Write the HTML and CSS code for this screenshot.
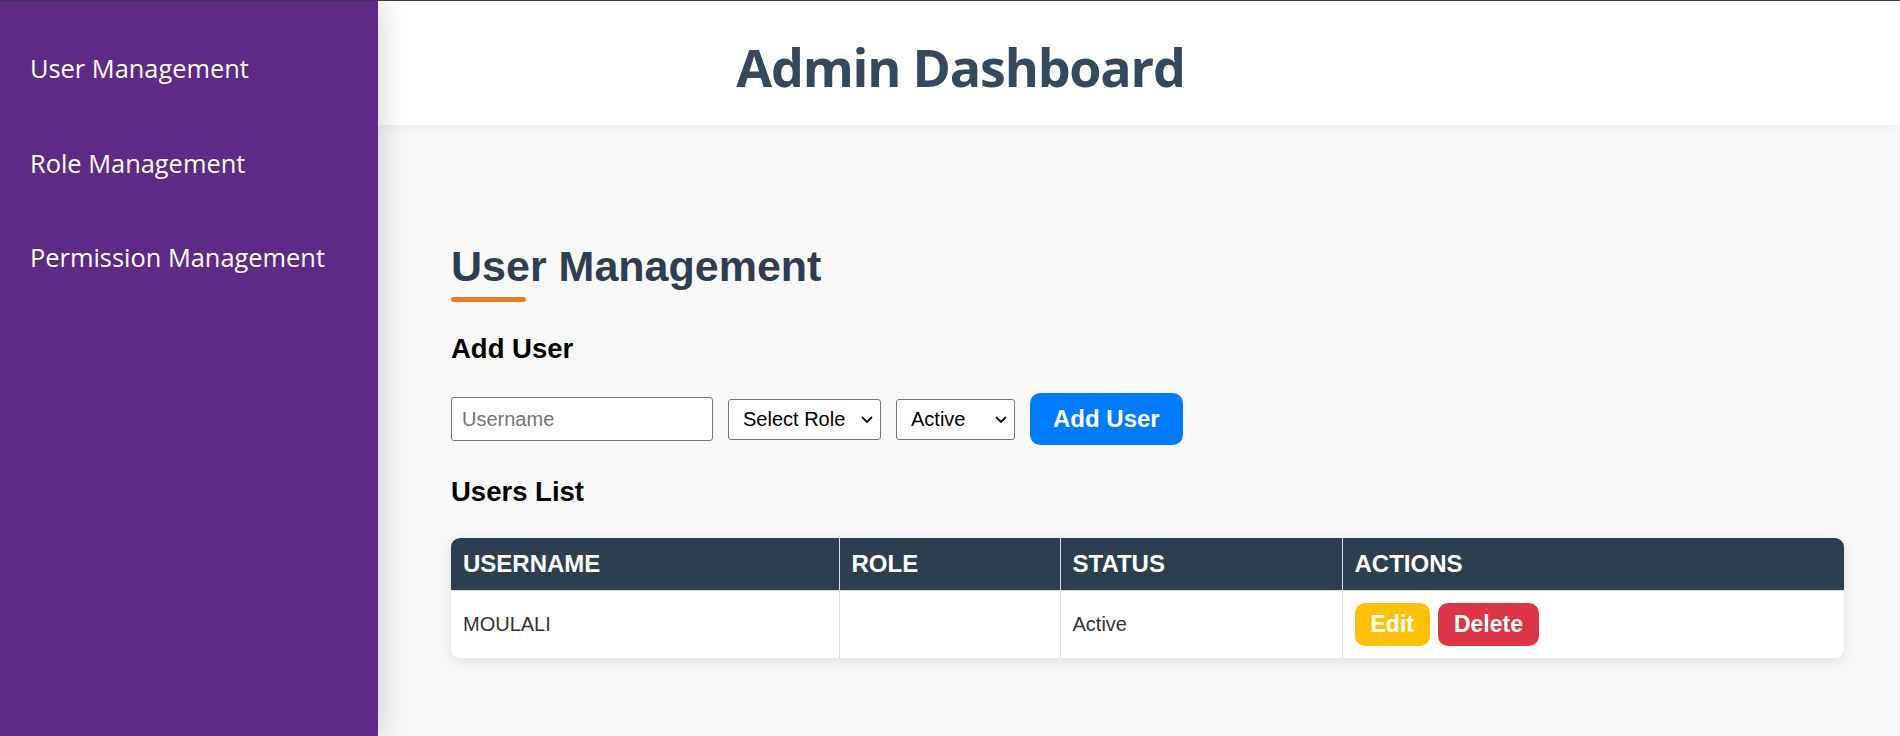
FILE: index.html
```html
<!DOCTYPE html>
<html lang="en">
<head>
<meta charset="utf-8">
<title>Admin Dashboard</title>
<link rel="stylesheet" href="styles.css">
</head>
<body>
  <aside class="sidebar">
    <ul class="nav">
      <li class="nav-item">User Management</li>
      <li class="nav-item">Role Management</li>
      <li class="nav-item">Permission Management</li>
    </ul>
  </aside>
  <div class="main">
    <header class="topbar">
      <h1 class="topbar-title">Admin Dashboard</h1>
    </header>
    <section class="content">
      <h2 class="page-title">User Management</h2>
      <h3 class="section-title">Add User</h3>
      <div class="add-form">
        <input class="text-input" type="text" placeholder="Username">
        <div class="select-wrap">
          <select class="select select-role">
            <option>Select Role</option>
            <option>Admin</option>
            <option>Editor</option>
          </select>
          <svg class="chev" width="12" height="8" viewBox="0 0 12 8"><path d="M1.5 1.5 L6 6 L10.5 1.5" fill="none" stroke="#111" stroke-width="1.8" stroke-linecap="round" stroke-linejoin="round"/></svg>
        </div>
        <div class="select-wrap">
          <select class="select select-status">
            <option>Active</option>
            <option>Inactive</option>
          </select>
          <svg class="chev" width="12" height="8" viewBox="0 0 12 8"><path d="M1.5 1.5 L6 6 L10.5 1.5" fill="none" stroke="#111" stroke-width="1.8" stroke-linecap="round" stroke-linejoin="round"/></svg>
        </div>
        <button class="btn btn-primary" type="button">Add User</button>
      </div>
      <h3 class="section-title list-title">Users List</h3>
      <div class="table-card">
        <table class="users-table">
          <thead>
            <tr>
              <th class="col-user">Username</th>
              <th class="col-role">Role</th>
              <th class="col-status">Status</th>
              <th class="col-actions">Actions</th>
            </tr>
          </thead>
          <tbody>
            <tr>
              <td>MOULALI</td>
              <td></td>
              <td>Active</td>
              <td>
                <div class="actions">
                  <button class="btn btn-small btn-edit" type="button">Edit</button>
                  <button class="btn btn-small btn-delete" type="button">Delete</button>
                </div>
              </td>
            </tr>
          </tbody>
        </table>
      </div>
    </section>
  </div>
</body>
</html>
```

FILE: styles.css
```css
* {
  box-sizing: border-box;
}

html, body {
  height: 100%;
}

body {
  margin: 0;
  display: flex;
  min-height: 100vh;
  border-top: 1px solid #3c3c3c;
  font-family: "Liberation Sans", Arial, sans-serif;
  background: #f8f8f8;
  overflow: hidden;
}

.sidebar {
  width: 378px;
  flex: 0 0 378px;
  background: #5d2a87;
  position: relative;
  z-index: 2;
  box-shadow: 0 0 30px rgba(0, 0, 0, 0.2);
}

.nav {
  list-style: none;
  margin: 0;
  padding: 20px 0 0;
}

.nav-item {
  padding: 30px 30px 30.5px;
  font-family: "Open Sans", "Noto Sans", sans-serif;
  font-size: 25.4px;
  line-height: 34px;
  color: #ffffff;
}

.main {
  flex: 1;
  display: flex;
  flex-direction: column;
  min-width: 0;
  background: #f8f8f8;
}

.topbar {
  height: 124px;
  padding: 30px 357px 0 0;
  background: #ffffff;
  box-shadow: 0 2px 10px rgba(0, 0, 0, 0.05);
  position: relative;
  z-index: 1;
}

.topbar-title {
  margin: 0;
  text-align: center;
  font-family: "Open Sans", "Noto Sans", sans-serif;
  font-weight: 700;
  font-size: 52px;
  line-height: normal;
  letter-spacing: -1.2px;
  color: #34495e;
}

.content {
  padding: 117px 56px 0 73px;
}

.page-title {
  margin: 0;
  font-size: 43px;
  font-weight: 700;
  line-height: normal;
  color: #2c3e50;
}

.page-title::after {
  content: "";
  display: block;
  width: 75px;
  height: 5px;
  margin-top: 6px;
  border-radius: 3px;
  background: #e67e22;
}

.section-title {
  margin: 31px 0 0;
  font-size: 27.5px;
  font-weight: 700;
  line-height: normal;
  color: #000;
}

.add-form {
  margin-top: 28px;
  display: flex;
  align-items: center;
  gap: 15px;
}

.text-input {
  width: 262px;
  height: 44px;
  padding: 9px 10px;
  border: 1px solid #767676;
  border-radius: 3px;
  background: #fff;
  font-family: "Liberation Sans", Arial, sans-serif;
  font-size: 20px;
  color: #000;
}

.text-input::placeholder {
  color: #757575;
}

.select-wrap {
  position: relative;
  display: flex;
}

.select {
  -webkit-appearance: none;
  appearance: none;
  height: 41px;
  padding: 0 30px 0 14px;
  border: 1px solid #767676;
  border-radius: 3px;
  background: #fff;
  font-family: "Liberation Sans", Arial, sans-serif;
  font-size: 20px;
  color: #000;
}

.select-role {
  width: 153px;
}

.select-status {
  width: 119px;
}

.chev {
  position: absolute;
  right: 8px;
  top: 17px;
  pointer-events: none;
}

.btn {
  border: none;
  font-family: "Liberation Sans", Arial, sans-serif;
  font-weight: 700;
  color: #fff;
  cursor: pointer;
  line-height: normal;
}

.btn-primary {
  padding: 12px 23px;
  font-size: 24px;
  border-radius: 10px;
  background: #007bff;
}

.list-title {
  margin-top: 31px;
}

.table-card {
  margin-top: 29.5px;
  border-radius: 9px;
  overflow: hidden;
  background: #fff;
  box-shadow: 0 3px 12px rgba(0, 0, 0, 0.1);
}

.users-table {
  width: 100%;
  border-collapse: collapse;
  border-style: hidden;
  table-layout: fixed;
}

.users-table th,
.users-table td {
  border: 1px solid #dddddd;
  padding: 12px;
  text-align: left;
  vertical-align: middle;
}

.users-table th {
  background: #2c3e50;
  color: #fff;
  font-size: 24px;
  font-weight: 700;
  text-transform: uppercase;
  line-height: normal;
}

.users-table td {
  font-size: 20px;
  color: #333;
  line-height: normal;
}

.col-user {
  width: 388px;
}

.col-role {
  width: 221px;
}

.col-status {
  width: 282px;
}

.actions {
  display: flex;
  gap: 8px;
}

.btn-small {
  padding: 8px 16px;
  font-size: 23px;
  border-radius: 10px;
}

.btn-edit {
  background: #ffc107;
}

.btn-delete {
  background: #dc3545;
}
```
